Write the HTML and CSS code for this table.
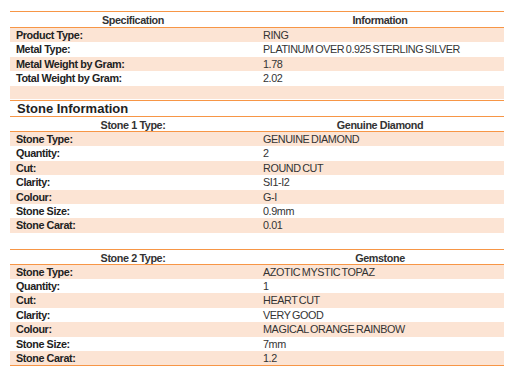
FILE: index.html
```html
<!DOCTYPE html>
<html>
<head>
<meta charset="utf-8">
<link rel="stylesheet" href="styles.css">
</head>
<body>
<div class="page">
  <section class="spec">
    <div class="row head"><div class="c1">Specification</div><div class="c2">Information</div></div>
    <div class="row alt"><div class="c1">Product Type:</div><div class="c2">RING</div></div>
    <div class="row"><div class="c1">Metal Type:</div><div class="c2">PLATINUM OVER 0.925 STERLING SILVER</div></div>
    <div class="row alt"><div class="c1">Metal Weight by Gram:</div><div class="c2">1.78</div></div>
    <div class="row"><div class="c1">Total Weight by Gram:</div><div class="c2">2.02</div></div>
    <div class="row alt empty"><div class="c1"></div><div class="c2"></div></div>
  </section>
  <h2 class="title">Stone Information</h2>
  <section class="stone first">
    <div class="row head"><div class="c1">Stone 1 Type:</div><div class="c2">Genuine Diamond</div></div>
    <div class="row alt"><div class="c1">Stone Type:</div><div class="c2">GENUINE DIAMOND</div></div>
    <div class="row"><div class="c1">Quantity:</div><div class="c2">2</div></div>
    <div class="row alt"><div class="c1">Cut:</div><div class="c2">ROUND CUT</div></div>
    <div class="row"><div class="c1">Clarity:</div><div class="c2">SI1-I2</div></div>
    <div class="row alt"><div class="c1">Colour:</div><div class="c2">G-I</div></div>
    <div class="row"><div class="c1">Stone Size:</div><div class="c2">0.9mm</div></div>
    <div class="row alt"><div class="c1">Stone Carat:</div><div class="c2">0.01</div></div>
  </section>
  <section class="stone second">
    <div class="row head"><div class="c1">Stone 2 Type:</div><div class="c2">Gemstone</div></div>
    <div class="row alt"><div class="c1">Stone Type:</div><div class="c2">AZOTIC MYSTIC TOPAZ</div></div>
    <div class="row"><div class="c1">Quantity:</div><div class="c2">1</div></div>
    <div class="row alt"><div class="c1">Cut:</div><div class="c2">HEART CUT</div></div>
    <div class="row"><div class="c1">Clarity:</div><div class="c2">VERY GOOD</div></div>
    <div class="row alt"><div class="c1">Colour:</div><div class="c2">MAGICAL ORANGE RAINBOW</div></div>
    <div class="row"><div class="c1">Stone Size:</div><div class="c2">7mm</div></div>
    <div class="row alt"><div class="c1">Stone Carat:</div><div class="c2">1.2</div></div>
  </section>
</div>
</body>
</html>
```

FILE: styles.css
```css
html, body {
  margin: 0;
  padding: 0;
  background: #ffffff;
}

.page {
  width: 494px;
  padding: 11px 0 0 10px;
  font-family: "Liberation Sans", Arial, sans-serif;
  font-size: 10.8px;
  letter-spacing: -0.4px;
  color: #333333;
}

.row {
  display: grid;
  grid-template-columns: 246px 248px;
  height: 14.4px;
  box-sizing: border-box;
  padding-top: 1px;
  line-height: 13.4px;
}

.row.alt {
  background: #fce4d4;
}

.row .c1 {
  padding-left: 6px;
  font-weight: bold;
  color: #222222;
  white-space: nowrap;
}

.row .c2 {
  padding-left: 7px;
  white-space: nowrap;
  word-spacing: -1px;
}

.row.head {
  border-bottom: 1px solid #f79646;
}

.row.head .c1,
.row.head .c2 {
  padding-left: 0;
  text-align: center;
  font-weight: bold;
  color: #333333;
  word-spacing: 0;
}

.spec {
  border-top: 1px solid #f79646;
  padding-bottom: 1.4px;
}

.spec .row.head {
  height: 16px;
  line-height: 15px;
}

.spec .row.empty {
  height: 13px;
}

.title {
  margin: 0;
  height: 15px;
  line-height: 15px;
  padding-left: 7px;
  font-size: 13px;
  font-weight: bold;
  letter-spacing: 0;
  color: #222222;
  border-top: 1px solid #f79646;
  border-bottom: 1px solid #f79646;
}

.stone .row.head {
  height: 15px;
  line-height: 14px;
}

.stone.first {
  margin-bottom: 16px;
}

.stone.second {
  border-top: 1px solid #f79646;
  border-bottom: 1px solid #f79646;
}
```
